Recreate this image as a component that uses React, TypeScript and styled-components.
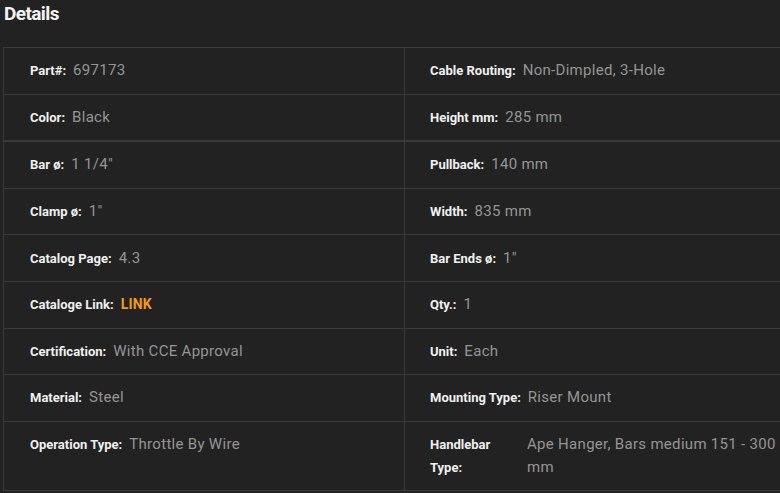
import React from "react";
import styled, { createGlobalStyle } from "styled-components";

const Global = createGlobalStyle`
  html, body { margin: 0; padding: 0; background: #222222; overflow: hidden; }
  body { font-family: Roboto, "Liberation Sans", Arial, sans-serif; }
`;

const Page = styled.div`
  width: 780px;
  height: 493px;
  overflow: hidden;
  background: #222222;
`;

const Title = styled.h2`
  margin: 0;
  padding: 2px 0 0 4px;
  height: 47px;
  box-sizing: border-box;
  font-family: Roboto, "Liberation Sans", sans-serif;
  font-weight: 700;
  font-size: 19px;
  letter-spacing: -0.6px;
  line-height: 24px;
  color: #f4f4f4;
`;

const Table = styled.div`
  margin-left: 3px;
  width: 804px;
  border-top: 1px solid #3a3a3a;
  border-left: 1px solid #3a3a3a;
`;

const Row = styled.div<{ $thick?: boolean }>`
  display: grid;
  grid-template-columns: 401px 402px;
  border-bottom: ${(p) => (p.$thick ? "2px" : "1px")} solid #3a3a3a;
`;

const Cell = styled.div<{ $right?: boolean }>`
  display: flex;
  align-items: flex-start;
  gap: 7px;
  padding: 11.3px 26px 11.3px ${(p) => (p.$right ? "25px" : "26px")};
  min-height: 23px;
  border-right: ${(p) => (p.$right ? "none" : "1px solid #3a3a3a")};
`;

const Label = styled.span<{ $width?: number }>`
  flex: ${(p) => (p.$width ? `0 0 ${p.$width}px` : "0 0 auto")};
  font-size: 13px;
  font-weight: 700;
  line-height: 23px;
  color: #f0f0f0;
`;

const Value = styled.span`
  font-size: 15px;
  line-height: 23px;
  color: #959595;
  letter-spacing: 0.3px;
`;

const Link = styled.a`
  font-size: 14px;
  font-weight: 700;
  line-height: 23px;
  color: #f39a1e;
  text-decoration: none;
  letter-spacing: 0.2px;
`;

type Item = { label: string; value: string; link?: boolean; labelWidth?: number };

const rows: [Item, Item, boolean?][] = [
  [{ label: "Part#:", value: "697173" }, { label: "Cable Routing:", value: "Non-Dimpled, 3-Hole" }],
  [{ label: "Color:", value: "Black" }, { label: "Height mm:", value: "285 mm" }, true],
  [{ label: "Bar ø:", value: "1 1/4\"" }, { label: "Pullback:", value: "140 mm" }],
  [{ label: "Clamp ø:", value: "1\"" }, { label: "Width:", value: "835 mm" }],
  [{ label: "Catalog Page:", value: "4.3" }, { label: "Bar Ends ø:", value: "1\"" }],
  [{ label: "Cataloge Link:", value: "LINK", link: true }, { label: "Qty.:", value: "1" }],
  [{ label: "Certification:", value: "With CCE Approval" }, { label: "Unit:", value: "Each" }],
  [{ label: "Material:", value: "Steel" }, { label: "Mounting Type:", value: "Riser Mount" }],
  [
    { label: "Operation Type:", value: "Throttle By Wire" },
    { label: "Handlebar Type:", value: "Ape Hanger, Bars medium 151 - 300 mm", labelWidth: 90 },
  ],
];

const Entry = ({ item, right }: { item: Item; right?: boolean }) => (
  <Cell $right={right}>
    <Label $width={item.labelWidth}>{item.label}</Label>
    {item.link ? <Link href="#">{item.value}</Link> : <Value>{item.value}</Value>}
  </Cell>
);

export default function App() {
  return (
    <Page>
      <Global />
      <Title>Details</Title>
      <Table>
        {rows.map(([a, b, thick], i) => (
          <Row key={i} $thick={thick}>
            <Entry item={a} />
            <Entry item={b} right />
          </Row>
        ))}
      </Table>
    </Page>
  );
}
